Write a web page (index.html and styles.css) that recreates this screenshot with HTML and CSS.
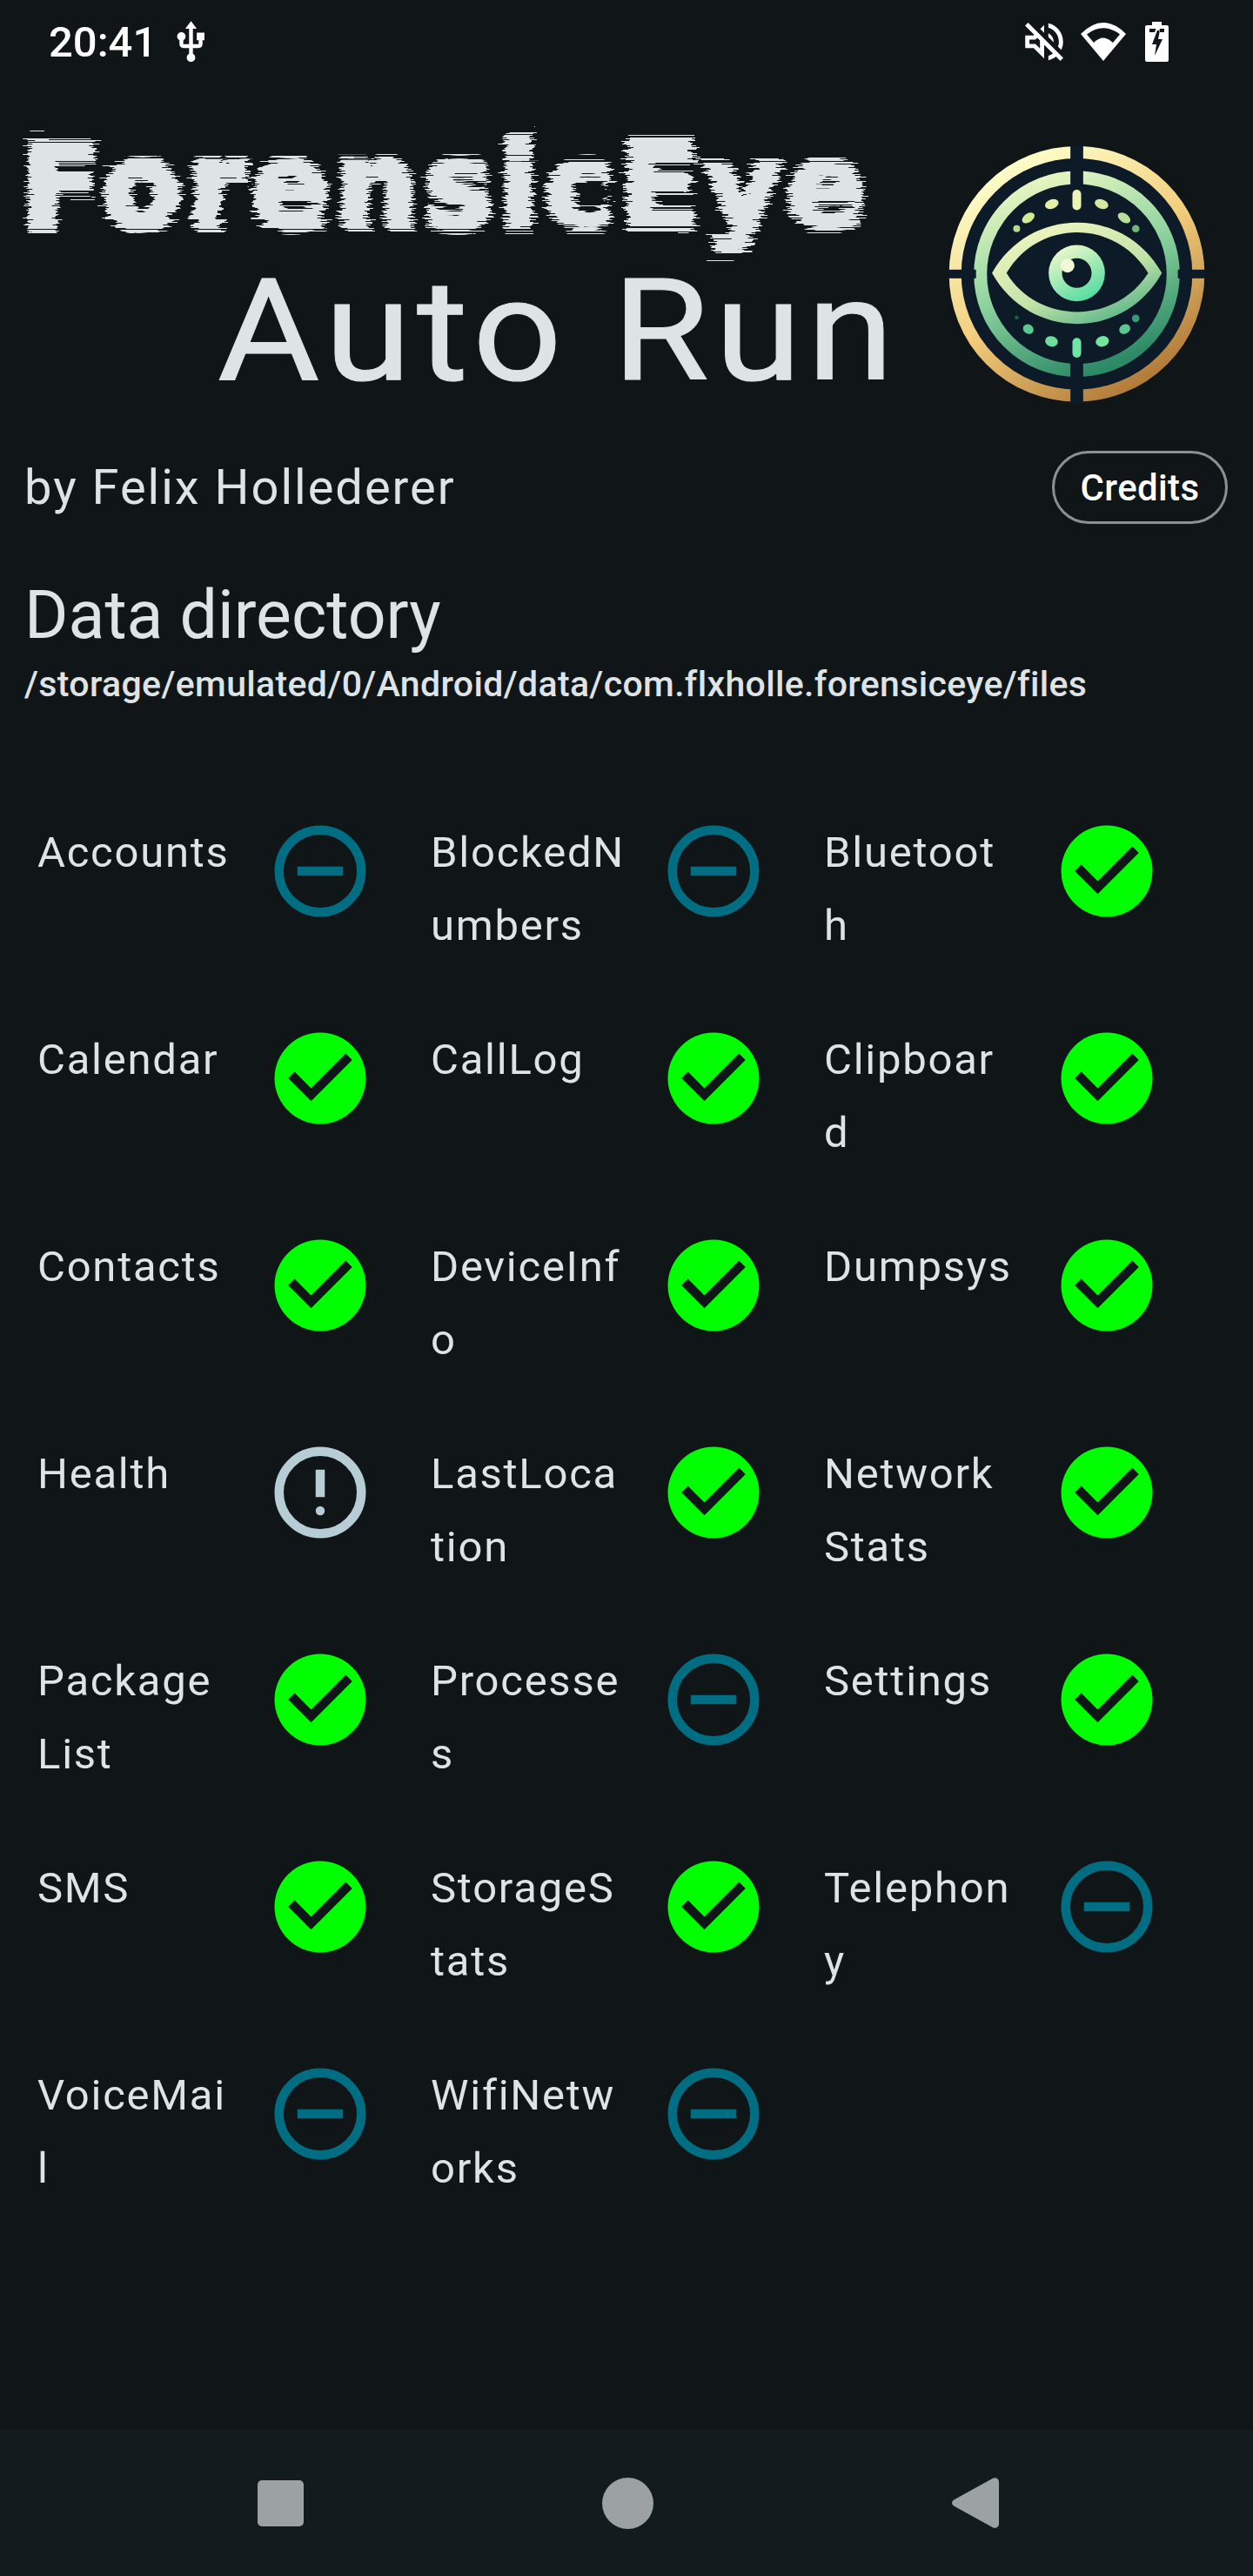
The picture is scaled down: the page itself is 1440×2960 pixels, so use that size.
FILE: index.html
```html
<!DOCTYPE html>
<html lang="en">

<head>
  <meta charset="UTF-8">
  <title>ForensicEye Auto Run</title>
  <link rel="stylesheet" href="styles.css">
</head>

<body>
  <svg class="defs" width="0" height="0" aria-hidden="true">
    <defs>
      <filter id="glitch" x="-5%" y="-10%" width="110%" height="120%">
        <feTurbulence type="fractalNoise" baseFrequency="0.002 0.55" numOctaves="2" seed="7" result="noise" />
        <feDisplacementMap in="SourceGraphic" in2="noise" scale="30" xChannelSelector="R" yChannelSelector="A" />
      </filter>
      <linearGradient id="ringOuter" x1="0.15" y1="0.1" x2="0.7" y2="1">
        <stop offset="0" stop-color="#fdfdc8" />
        <stop offset="0.5" stop-color="#f2cd7c" />
        <stop offset="1" stop-color="#b07a38" />
      </linearGradient>
      <linearGradient id="ringInner" x1="0.2" y1="0" x2="0.6" y2="1">
        <stop offset="0" stop-color="#eef8c4" />
        <stop offset="0.5" stop-color="#8fd4a0" />
        <stop offset="1" stop-color="#2c8a66" />
      </linearGradient>
      <linearGradient id="eyeLine" x1="0.1" y1="0" x2="0.8" y2="1">
        <stop offset="0" stop-color="#f6f7c4" />
        <stop offset="0.6" stop-color="#c3e3a8" />
        <stop offset="1" stop-color="#4eaf84" />
      </linearGradient>
      <linearGradient id="iris" x1="0.2" y1="0.1" x2="0.7" y2="1">
        <stop offset="0" stop-color="#e9f6c8" />
        <stop offset="1" stop-color="#4fdca0" />
      </linearGradient>
      <symbol id="ok" viewBox="0 0 24 24">
        <circle cx="12" cy="12" r="10" fill="#00ff00" />
        <path fill="#101518" d="M10 17l-5-5 1.41-1.41L10 14.17l7.59-7.59L19 8l-9 9z" />
      </symbol>
      <symbol id="off" viewBox="0 0 24 24">
        <circle cx="12" cy="12" r="9" fill="none" stroke="#006e82" stroke-width="2" />
        <rect x="7" y="11" width="10" height="2" fill="#006e82" />
      </symbol>
      <symbol id="warn" viewBox="0 0 24 24">
        <circle cx="12" cy="12" r="9" fill="none" stroke="#b6cdd5" stroke-width="2" />
        <rect x="11" y="7" width="2" height="6" fill="#b6cdd5" />
        <circle cx="12" cy="16" r="1" fill="#b6cdd5" />
      </symbol>
    </defs>
  </svg>

  <div class="statusbar">
    <span class="clock">20:41</span>
    <svg class="sb-usb" viewBox="0 0 24 24">
      <path fill="#fff" d="M15 7v4h1v2h-3V5h2l-3-4-3 4h2v8H8v-2.07c.7-.37 1.2-1.08 1.2-1.93 0-1.21-.99-2.2-2.2-2.2-1.21 0-2.2.99-2.2 2.2 0 .85.5 1.56 1.2 1.93V13c0 1.11.89 2 2 2h3v3.05c-.71.37-1.2 1.1-1.2 1.95 0 1.22.99 2.2 2.2 2.2 1.21 0 2.2-.98 2.2-2.2 0-.85-.49-1.58-1.2-1.95V15h3c1.11 0 2-.89 2-2v-2h1V7h-4z" />
    </svg>
    <div class="sb-right">
      <svg class="sb-mute" viewBox="0 0 24 24">
        <path fill="#fff" d="M4.34 2.93L2.93 4.34 7.29 8.7 7 9H3v6h4l5 5v-6.59l4.18 4.18c-.65.49-1.38.88-2.18 1.11v2.06c1.34-.3 2.57-.92 3.61-1.75l2.05 2.05 1.41-1.41L4.34 2.93zM10 15.17L7.83 13H5v-2h2.83l.88-.88L10 11.41v3.76zM19 12c0 .82-.15 1.61-.41 2.34l1.53 1.53c.56-1.17.88-2.48.88-3.87 0-4.28-2.99-7.86-7-8.77v2.06c2.89.86 5 3.54 5 6.71zm-7-8l-1.88 1.88L12 7.76zm4.5 8c0-1.77-1.02-3.29-2.5-4.03v1.79l2.48 2.48c.01-.08.02-.16.02-.24z" />
      </svg>
      <svg class="sb-wifi" viewBox="0 0 52 44">
        <path fill="#fff" fill-rule="evenodd" d="M26 44L0 13Q26 -13 52 13ZM7 13.5Q26 -1 45 13.5L37 23Q26 12 15 23Z" />
      </svg>
      <svg class="sb-batt" viewBox="0 0 27 46">
        <path fill="#fff" fill-rule="evenodd" d="M8 0h11v4h6a2 2 0 0 1 2 2v38a2 2 0 0 1-2 2H2a2 2 0 0 1-2-2V6a2 2 0 0 1 2-2h6zM5 8v4h6l1.500-4zM17 8l-1 4h6V8zM14 10L8 26h5l-2 13 9-19h-5l2-10z" />
      </svg>
    </div>
  </div>

  <main class="main">
    <header class="header">
      <div class="titles">
        <h1 class="brand">ForensicEye</h1>
        <div class="subtitle">Auto Run</div>
      </div>
      <svg class="logo" viewBox="90 85 884 884">
        <circle cx="532" cy="525" r="440" fill="#0c1b27" />
        <circle cx="532" cy="525" r="419" fill="none" stroke="url(#ringOuter)" stroke-width="42" />
        <circle cx="532" cy="525" r="332" fill="none" stroke="url(#ringInner)" stroke-width="45" />
        <rect x="510" y="80" width="44" height="890" fill="#0c1b27" />
        <rect x="85" y="510" width="100" height="30" fill="#0c1b27" />
        <rect x="880" y="510" width="100" height="30" fill="#0c1b27" />
        <path fill="url(#eyeLine)" fill-rule="evenodd" d="M240 522C370 290 695 290 825 522C695 755 370 755 240 522ZM290 522C400 700 665 700 778 522C665 335 400 335 290 522Z" />
        <circle cx="532" cy="522" r="97" fill="url(#iris)" />
        <circle cx="532" cy="522" r="51" fill="#0c1b27" />
        <circle cx="500" cy="496" r="24" fill="#f4f8d8" />
        <rect x="517" y="235" width="30" height="70" rx="15" fill="#ecf3b4" />
        <ellipse cx="446" cy="284" rx="24" ry="16" transform="rotate(-20 446 284)" fill="#e6efa8" />
        <ellipse cx="617" cy="284" rx="24" ry="16" transform="rotate(20 617 284)" fill="#d6e8a0" />
        <ellipse cx="365" cy="332" rx="24" ry="15" transform="rotate(-35 365 332)" fill="#d3eb90" />
        <ellipse cx="695" cy="332" rx="24" ry="15" transform="rotate(35 695 332)" fill="#b6e09c" />
        <circle cx="325" cy="369" r="12" fill="#b4dc84" />
        <circle cx="735" cy="369" r="13" fill="#70b47a" />
        <rect x="517" y="745" width="30" height="68" rx="15" fill="#6fe4a4" />
        <ellipse cx="445" cy="757" rx="22" ry="18" transform="rotate(15 445 757)" fill="#6fdc9c" />
        <ellipse cx="620" cy="757" rx="23" ry="18" transform="rotate(-15 620 757)" fill="#74e69c" />
        <ellipse cx="365" cy="715" rx="19" ry="16" transform="rotate(30 365 715)" fill="#58c890" />
        <ellipse cx="697" cy="715" rx="20" ry="16" transform="rotate(-30 697 715)" fill="#58c890" />
        <circle cx="735" cy="678" r="13" fill="#379a78" />
        <circle cx="325" cy="675" r="7" fill="#1e5c3c" />
      </svg>
    </header>

    <div class="byline">
      <span class="author">by Felix Hollederer</span>
      <button class="credits">Credits</button>
    </div>

    <h2 class="dir-title">Data directory</h2>
    <div class="dir-path">/storage/emulated/0/Android/data/com.flxholle.forensiceye/files</div>

    <div class="modules">
      <div class="module"><span class="module-name">Accounts</span><svg class="state"><use href="#off" /></svg></div>
      <div class="module"><span class="module-name">BlockedNumbers</span><svg class="state"><use href="#off" /></svg></div>
      <div class="module"><span class="module-name">Bluetooth</span><svg class="state"><use href="#ok" /></svg></div>
      <div class="module"><span class="module-name">Calendar</span><svg class="state"><use href="#ok" /></svg></div>
      <div class="module"><span class="module-name">CallLog</span><svg class="state"><use href="#ok" /></svg></div>
      <div class="module"><span class="module-name">Clipboard</span><svg class="state"><use href="#ok" /></svg></div>
      <div class="module"><span class="module-name">Contacts</span><svg class="state"><use href="#ok" /></svg></div>
      <div class="module"><span class="module-name">DeviceInfo</span><svg class="state"><use href="#ok" /></svg></div>
      <div class="module"><span class="module-name">Dumpsys</span><svg class="state"><use href="#ok" /></svg></div>
      <div class="module"><span class="module-name">Health</span><svg class="state"><use href="#warn" /></svg></div>
      <div class="module"><span class="module-name">LastLocation</span><svg class="state"><use href="#ok" /></svg></div>
      <div class="module"><span class="module-name">Network Stats</span><svg class="state"><use href="#ok" /></svg></div>
      <div class="module"><span class="module-name">Package List</span><svg class="state"><use href="#ok" /></svg></div>
      <div class="module"><span class="module-name">Processes</span><svg class="state"><use href="#off" /></svg></div>
      <div class="module"><span class="module-name">Settings</span><svg class="state"><use href="#ok" /></svg></div>
      <div class="module"><span class="module-name">SMS</span><svg class="state"><use href="#ok" /></svg></div>
      <div class="module"><span class="module-name">StorageStats</span><svg class="state"><use href="#ok" /></svg></div>
      <div class="module"><span class="module-name">Telephony</span><svg class="state"><use href="#off" /></svg></div>
      <div class="module"><span class="module-name">VoiceMail</span><svg class="state"><use href="#off" /></svg></div>
      <div class="module"><span class="module-name">WifiNetworks</span><svg class="state"><use href="#off" /></svg></div>
    </div>
  </main>

  <nav class="navbar">
    <div class="nav-cell"><div class="nav-square"></div></div>
    <div class="nav-cell"><div class="nav-circle"></div></div>
    <div class="nav-cell">
      <svg class="nav-back" viewBox="0 0 54 58">
        <path fill="#9ca1a2" d="M47 .8c3-1.800 7 .4 7 4v48.400c0 3.600-4 5.800-7 4L3 33c-4-2.200-4-5.800 0-8z" />
      </svg>
    </div>
  </nav>
</body>

</html>
```

FILE: styles.css
```css
* {
  box-sizing: border-box;
}

body {
  margin: 0;
  height: 2960px;
  display: flex;
  flex-direction: column;
  background: #101518;
  color: #dee3e5;
  font-family: Roboto, "Noto Sans", sans-serif;
}

.defs {
  position: absolute;
}

/* status bar */
.statusbar {
  height: 96px;
  display: flex;
  align-items: center;
  padding: 0 97px 0 56px;
  color: #fff;
}

.clock {
  font-size: 49px;
  font-weight: 500;
}

.sb-usb {
  width: 53px;
  height: 53px;
  margin-left: 13px;
}

.sb-right {
  margin-left: auto;
  display: flex;
  align-items: center;
}

.sb-mute {
  width: 58px;
  height: 58px;
}

.sb-wifi {
  width: 52px;
  height: 44px;
  margin-left: 13px;
}

.sb-batt {
  width: 27px;
  height: 46px;
  margin-left: 22px;
}

/* title + logo */
.header {
  display: flex;
  padding: 38px 55px 0 28px;
  justify-content: space-between;
}

.titles {
  width: 993px;
  display: flex;
  flex-direction: column;
}

.brand {
  margin: 0 0 0 -4px;
  font-family: "DejaVu Sans", sans-serif;
  font-weight: 700;
  font-size: 134px;
  line-height: 160px;
  letter-spacing: 6.5px;
  -webkit-text-stroke: 8px #dee3e5;
  filter: url(#glitch);
  white-space: nowrap;
}

.subtitle {
  align-self: flex-end;
  margin-right: -13px;
  padding-top: 3px;
  font-size: 164px;
  line-height: 167px;
  letter-spacing: 6px;
  -webkit-text-stroke: 1px #dee3e5;
  transform: scaleX(1.1);
  transform-origin: right;
  white-space: nowrap;
}

.logo {
  width: 295px;
  height: 295px;
  margin-top: 34px;
}

.byline {
  display: flex;
  justify-content: space-between;
  align-items: center;
  padding: 0 29px 0 28px;
  margin-top: 54px;
}

.author {
  font-size: 56px;
  letter-spacing: 2px;
}

.credits {
  width: 202px;
  height: 84px;
  padding: 0;
  background: none;
  border: 3.5px solid #899193;
  border-radius: 42px;
  color: #fff;
  font: 500 42px Roboto, sans-serif;
  letter-spacing: .35px;
}

.dir-title {
  margin: 55px 0 0 28px;
  font-size: 77px;
  font-weight: 400;
  line-height: 101px;
}

.dir-path {
  margin-left: 28px;
  font-size: 41px;
  font-weight: 500;
  line-height: 56px;
  letter-spacing: .35px;
}

/* module grid */
.modules {
  display: grid;
  grid-template-columns: repeat(3, 452px);
  row-gap: 70px;
  padding-left: 43px;
  margin-top: 124px;
}

.module {
  display: flex;
  align-items: flex-start;
}

.module-name {
  width: 224px;
  margin-right: 38px;
  font-size: 49px;
  line-height: 84px;
  letter-spacing: 1.75px;
  overflow-wrap: anywhere;
}

.state {
  width: 126px;
  height: 126px;
  flex: none;
}

/* nav bar */
.navbar {
  margin-top: auto;
  height: 168px;
  background: #121b1d;
  display: flex;
  justify-content: center;
}

.nav-cell {
  width: 398px;
  display: flex;
  justify-content: center;
  align-items: center;
}

.nav-square {
  width: 53px;
  height: 53px;
  border-radius: 5px;
  background: #9ca1a2;
}

.nav-circle {
  width: 59px;
  height: 59px;
  margin-left: 2px;
  border-radius: 50%;
  background: #9ca1a2;
}

.nav-back {
  width: 54px;
  height: 58px;
  margin-left: 5px;
}
```
